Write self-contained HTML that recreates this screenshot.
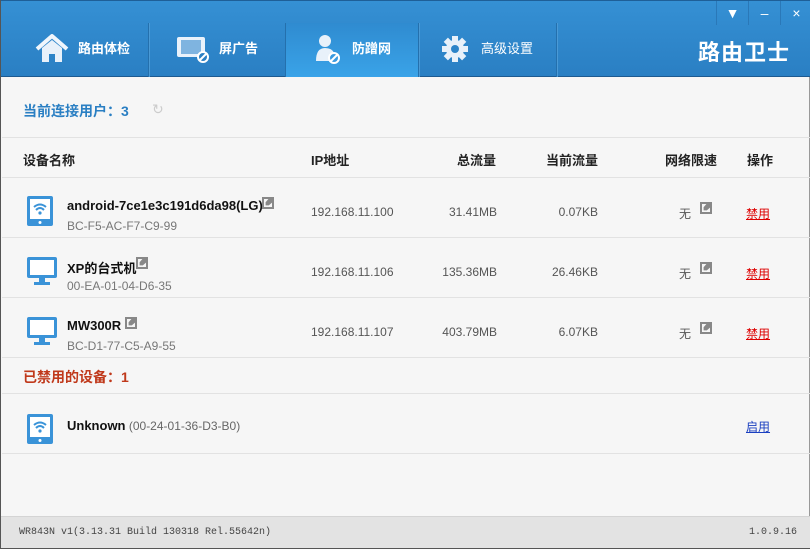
<!DOCTYPE html>
<html><head><meta charset="utf-8"><style>
*{margin:0;padding:0;box-sizing:border-box}
body{width:810px;height:549px;overflow:hidden;background:#f6f6f6;font-family:"Liberation Sans","Noto Sans CJK SC",sans-serif;font-size:12px;color:#222;position:relative;border-left:1px solid #555;border-right:1px solid #999}
.hdr{position:absolute;left:0;top:0;width:810px;height:77px;background:linear-gradient(#3590d4,#2a7fc3);border-top:1px solid #1e5f98;border-bottom:1px solid #1d5a90}
.tab{position:absolute;top:22px;height:54px;border-right:1px solid #2470ad;box-shadow:1px 0 0 #4a9ad6;color:#fff;font-weight:bold;font-size:13px}
.tab span{position:absolute;top:15px}
.act{background:linear-gradient(#2f8bd0,#3aa3e8)}
.wb{position:absolute;top:0;height:24px;width:32px;border-left:1px solid #2a78b8;color:#fff;text-align:center;font-size:14px;line-height:24px}
.abs{position:absolute}
.line{position:absolute;left:1px;width:808px;height:1px;background:#e2e2e2}
.t{position:absolute;font-size:12px;color:#555}
.b{font-weight:bold;color:#111;font-size:13px}
.h{position:absolute;top:150px;font-weight:bold;font-size:13px;color:#222}
.r{text-align:right}
.ed{display:inline-block;width:12px;height:12px;background:#888;position:absolute;border:2px solid #888}
.ed::after{content:"";position:absolute;left:0;top:0;width:8px;height:8px;background:#f6f6f6;clip-path:polygon(0 0,55% 0,20% 40%,20% 80%,60% 80%,100% 45%,100% 100%,0 100%)}
.red{color:#d00;text-decoration:underline;position:absolute;left:745px;font-size:12px}
</style></head><body>
<div class="hdr">
 <div class="tab" style="left:0;width:148px"><svg class="abs" style="left:34px;top:11px" width="34" height="30" viewBox="0 0 34 30"><path d="M2 15 L17 2 L32 15" stroke="#f0f6fc" stroke-width="4" fill="none" stroke-linejoin="round"/><path d="M7 14 L17 6 L27 14 V28 H20 V20 H14 V28 H7Z" fill="#e8f1fa"/></svg><span style="left:77px">路由体检</span></div>
 <div class="tab" style="left:148px;width:137px"><svg class="abs" style="left:26px;top:12px" width="36" height="28"><rect x="2" y="2" width="28" height="20" rx="2" fill="#e9f2fb"/><rect x="6" y="5" width="20" height="14" fill="#7fb4e0"/><circle cx="28" cy="22" r="5" fill="#2a7fc3" stroke="#fff" stroke-width="2"/><path d="M25 25 L31 19" stroke="#fff" stroke-width="2"/></svg><span style="left:70px">屏广告</span></div>
 <div class="tab act" style="left:285px;width:133px"><svg class="abs" style="left:26px;top:10px" width="30" height="32"><circle cx="13" cy="8" r="6" fill="#e8f1fa"/><path d="M4 28 Q4 15 13 15 Q20 15 22 20 L18 28Z" fill="#e8f1fa"/><circle cx="22" cy="25" r="5" fill="#3a9ae0" stroke="#fff" stroke-width="2"/><path d="M19 28 L25 22" stroke="#fff" stroke-width="2"/></svg><span style="left:66px">防蹭网</span></div>
 <div class="tab" style="left:418px;width:138px"><svg class="abs" style="left:22px;top:12px" width="28" height="28" viewBox="0 0 28 28"><g fill="#e8f1fa"><circle cx="14" cy="14" r="9"/><rect x="11" y="1" width="6" height="26"/><rect x="1" y="11" width="26" height="6"/><rect x="11" y="1" width="6" height="26" transform="rotate(45 14 14)"/><rect x="11" y="1" width="6" height="26" transform="rotate(-45 14 14)"/></g><circle cx="14" cy="14" r="4" fill="#2d84c8"/></svg><span style="left:62px;font-weight:normal">高级设置</span></div>
 <div class="abs" style="left:697px;top:34px;color:#fff;font-weight:bold;font-size:22px;letter-spacing:1px">路由卫士</div>
 <div class="wb" style="left:715px">▼</div><div class="wb" style="left:747px">–</div><div class="wb" style="left:779px">×</div>
</div>
<div class="abs" style="left:22px;top:101px;color:#2a7fc3;font-weight:bold;font-size:14px">当前连接用户：3</div>
<div class="abs" style="left:151px;top:101px;color:#ccc;font-size:14px">↻</div>
<div class="line" style="top:137px"></div>
<div class="h" style="left:22px">设备名称</div><div class="h" style="left:310px">IP地址</div><div class="h" style="left:456px">总流量</div><div class="h" style="left:545px">当前流量</div><div class="h" style="left:664px">网络限速</div><div class="h" style="left:746px">操作</div>
<div class="line" style="top:177px"></div>
<svg class="abs" style="left:26px;top:196px" width="26" height="30"><rect width="26" height="30" rx="2" fill="#3a93d8"/><rect x="3" y="3" width="20" height="20" fill="#fff"/><path d="M7 11 Q13 6 19 11 M9 14 Q13 10 17 14" stroke="#3a93d8" stroke-width="2" fill="none"/><circle cx="13" cy="17" r="1.6" fill="#3a93d8"/><circle cx="13" cy="26.5" r="1.5" fill="#fff"/></svg>
<div class="abs b" style="left:66px;top:198px">android-7ce1e3c191d6da98(LG)</div><span class="ed" style="left:261px;top:197px"></span>
<div class="t" style="left:66px;top:219px;color:#777">BC-F5-AC-F7-C9-99</div>
<div class="t" style="left:310px;top:205px">192.168.11.100</div><div class="t r" style="left:400px;width:96px;top:205px">31.41MB</div><div class="t r" style="left:500px;width:97px;top:205px">0.07KB</div>
<div class="t" style="left:678px;top:205px">无</div><span class="ed" style="left:699px;top:202px"></span><span class="red" style="top:205px">禁用</span>
<div class="line" style="top:237px"></div>
<svg class="abs" style="left:26px;top:257px" width="30" height="30"><rect width="30" height="21" rx="2" fill="#3a93d8"/><rect x="3" y="3" width="24" height="15" fill="#fff"/><rect x="12" y="21" width="6" height="4" fill="#3a93d8"/><rect x="7" y="25" width="16" height="3" fill="#3a93d8"/></svg>
<div class="abs b" style="left:66px;top:258px">XP的台式机</div><span class="ed" style="left:135px;top:257px"></span>
<div class="t" style="left:66px;top:279px;color:#777">00-EA-01-04-D6-35</div>
<div class="t" style="left:310px;top:265px">192.168.11.106</div><div class="t r" style="left:400px;width:96px;top:265px">135.36MB</div><div class="t r" style="left:500px;width:97px;top:265px">26.46KB</div>
<div class="t" style="left:678px;top:265px">无</div><span class="ed" style="left:699px;top:262px"></span><span class="red" style="top:265px">禁用</span>
<div class="line" style="top:297px"></div>
<svg class="abs" style="left:26px;top:317px" width="30" height="30"><rect width="30" height="21" rx="2" fill="#3a93d8"/><rect x="3" y="3" width="24" height="15" fill="#fff"/><rect x="12" y="21" width="6" height="4" fill="#3a93d8"/><rect x="7" y="25" width="16" height="3" fill="#3a93d8"/></svg>
<div class="abs b" style="left:66px;top:318px">MW300R</div><span class="ed" style="left:124px;top:317px"></span>
<div class="t" style="left:66px;top:339px;color:#777">BC-D1-77-C5-A9-55</div>
<div class="t" style="left:310px;top:325px">192.168.11.107</div><div class="t r" style="left:400px;width:96px;top:325px">403.79MB</div><div class="t r" style="left:500px;width:97px;top:325px">6.07KB</div>
<div class="t" style="left:678px;top:325px">无</div><span class="ed" style="left:699px;top:322px"></span><span class="red" style="top:325px">禁用</span>
<div class="line" style="top:357px"></div>
<div class="abs" style="left:22px;top:367px;color:#c0391b;font-weight:bold;font-size:14px">已禁用的设备：1</div>
<div class="line" style="top:393px"></div>
<svg class="abs" style="left:26px;top:414px" width="26" height="30"><rect width="26" height="30" rx="2" fill="#3a93d8"/><rect x="3" y="3" width="20" height="20" fill="#fff"/><path d="M7 11 Q13 6 19 11 M9 14 Q13 10 17 14" stroke="#3a93d8" stroke-width="2" fill="none"/><circle cx="13" cy="17" r="1.6" fill="#3a93d8"/><circle cx="13" cy="26.5" r="1.5" fill="#fff"/></svg>
<div class="abs" style="left:66px;top:418px"><span class="b">Unknown</span> <span style="color:#666">(00-24-01-36-D3-B0)</span></div>
<span class="red" style="top:418px;color:#1a3fc0">启用</span>
<div class="line" style="top:453px"></div>
<div class="abs" style="left:0;top:516px;width:810px;height:33px;background:#e3e3e3;border-top:1px solid #d4d4d4;border-bottom:1px solid #555;font-family:'Liberation Mono',monospace;font-size:10px;color:#444">
<div class="abs" style="left:18px;top:10px">WR843N v1(3.13.31 Build 130318 Rel.55642n)</div>
<div class="abs" style="right:14px;top:10px">1.0.9.16</div></div>
</body></html>
